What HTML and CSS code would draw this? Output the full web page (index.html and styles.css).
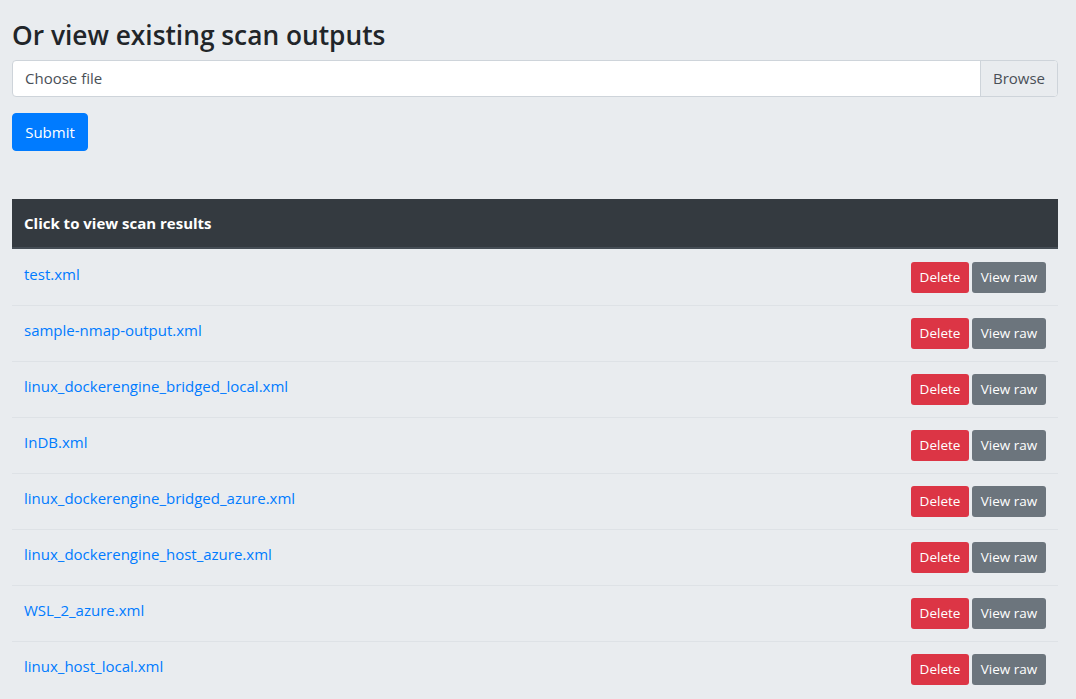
FILE: index.html
```html
<!DOCTYPE html>
<html lang="en">
<head>
<meta charset="utf-8">
<title>Scan outputs</title>
<link rel="stylesheet" href="styles.css">
</head>
<body>
<main class="page">
  <h3 class="title">Or view existing scan outputs</h3>
  <form class="upload">
    <label class="file">
      <span class="file-label">Choose file</span>
      <span class="file-browse">Browse</span>
    </label>
    <button type="button" class="btn btn-primary">Submit</button>
  </form>

  <table class="results">
    <thead>
      <tr><th colspan="2">Click to view scan results</th></tr>
    </thead>
    <tbody>
      <tr><td><a href="#">test.xml</a></td><td class="actions"><span class="btn-sm btn-danger">Delete</span><span class="btn-sm btn-secondary">View raw</span></td></tr>
      <tr><td><a href="#">sample-nmap-output.xml</a></td><td class="actions"><span class="btn-sm btn-danger">Delete</span><span class="btn-sm btn-secondary">View raw</span></td></tr>
      <tr><td><a href="#">linux_dockerengine_bridged_local.xml</a></td><td class="actions"><span class="btn-sm btn-danger">Delete</span><span class="btn-sm btn-secondary">View raw</span></td></tr>
      <tr><td><a href="#">InDB.xml</a></td><td class="actions"><span class="btn-sm btn-danger">Delete</span><span class="btn-sm btn-secondary">View raw</span></td></tr>
      <tr><td><a href="#">linux_dockerengine_bridged_azure.xml</a></td><td class="actions"><span class="btn-sm btn-danger">Delete</span><span class="btn-sm btn-secondary">View raw</span></td></tr>
      <tr><td><a href="#">linux_dockerengine_host_azure.xml</a></td><td class="actions"><span class="btn-sm btn-danger">Delete</span><span class="btn-sm btn-secondary">View raw</span></td></tr>
      <tr><td><a href="#">WSL_2_azure.xml</a></td><td class="actions"><span class="btn-sm btn-danger">Delete</span><span class="btn-sm btn-secondary">View raw</span></td></tr>
      <tr><td><a href="#">linux_host_local.xml</a></td><td class="actions"><span class="btn-sm btn-danger">Delete</span><span class="btn-sm btn-secondary">View raw</span></td></tr>
    </tbody>
  </table>
</main>
</body>
</html>
```

FILE: styles.css
```css
html, body {
  margin: 0;
  padding: 0;
  background: #e9ecef;
}
body {
  font-family: "Open Sans", "Noto Sans", sans-serif;
  font-size: 15px;
  line-height: 24px;
  color: #212529;
}
.page {
  padding: 18px 18px 0 12px;
}
.title {
  margin: 0 0 8px 0;
  font-size: 26.3px;
  font-weight: 600;
  line-height: 34px;
  color: #212529;
}
.upload {
  display: flex;
  flex-direction: column;
  align-items: flex-start;
  gap: 16px;
  margin: 0 0 48px 0;
}
.file {
  display: flex;
  width: 100%;
  box-sizing: border-box;
  height: 37px;
  background: #fff;
  border: 1px solid #ced4da;
  border-radius: 4px;
  overflow: hidden;
  color: #495057;
}
.file-label {
  flex: 1;
  padding: 5px 12px 6px;
  line-height: 24px;
}
.file-browse {
  padding: 6px 12px;
  line-height: 23px;
  background: #e9ecef;
  border-left: 1px solid #ced4da;
  width: 52px;
  text-align: center;
}
.btn {
  font: inherit;
  border: 1px solid transparent;
  border-radius: 4px;
  padding: 6px 12px;
  line-height: 24px;
  height: 38px;
  box-sizing: border-box;
  width: 76px;
}
.btn-primary {
  background: #007bff;
  border-color: #007bff;
  color: #fff;
}
.results {
  width: 100%;
  border-collapse: separate;
  border-spacing: 0;
}
.results th {
  background: #343a40;
  color: #fff;
  text-align: left;
  font-weight: 700;
  padding: 12px;
  line-height: 24px;
  border-bottom: 2px solid #454d55;
}
.results td {
  padding: 12px;
  vertical-align: top;
  border-top: 1px solid #dee2e6;
  line-height: 24px;
}
.results tbody tr:first-child td {
  border-top: none;
  padding-top: 13px;
}
.results a {
  color: #007bff;
  text-decoration: none;
}
.actions {
  text-align: right;
  white-space: nowrap;
  font-size: 0;
  line-height: 0;
}
.results td.actions {
  line-height: 0;
}
.btn-sm {
  display: inline-block;
  vertical-align: top;
  box-sizing: border-box;
  height: 31px;
  padding: 5px 8px 4px;
  font-size: 13.5px;
  line-height: 21px;
  border-radius: 3px;
  color: #fff;
  text-align: center;
}
.btn-danger {
  background: #dc3545;
  width: 58px;
  margin-right: 3px;
}
.btn-secondary {
  background: #6c757d;
  width: 74px;
}
```
